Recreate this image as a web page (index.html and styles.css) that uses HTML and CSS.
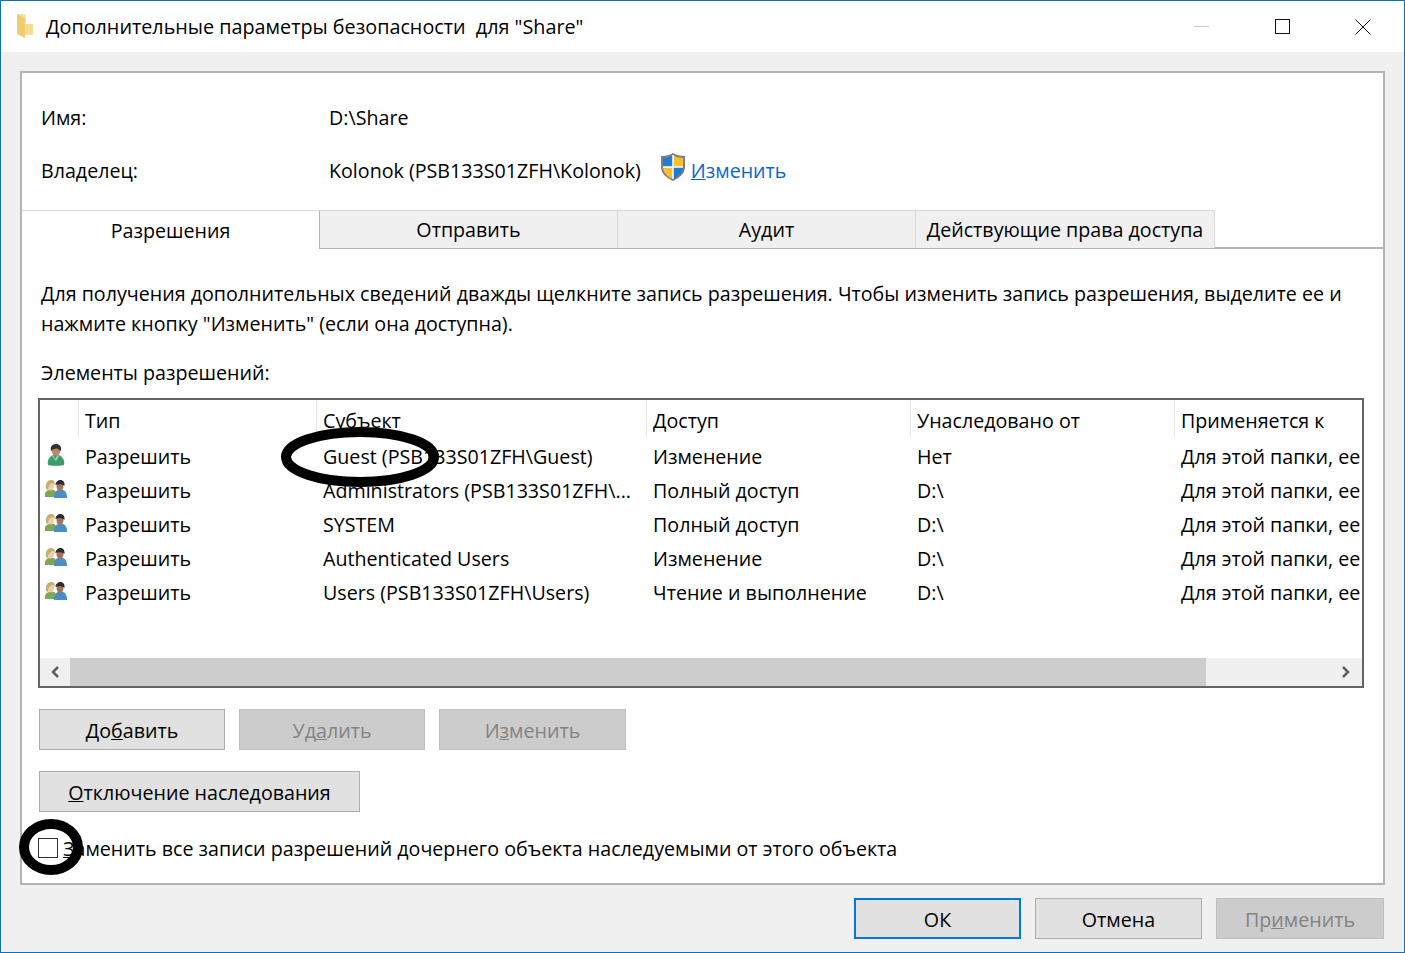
FILE: index.html
```html
<!DOCTYPE html>
<html lang="ru">
<head>
<meta charset="utf-8">
<title>Дополнительные параметры безопасности для "Share"</title>
<link rel="stylesheet" href="styles.css">
</head>
<body>
<svg class="defs" width="0" height="0" aria-hidden="true">
  <defs>
    <symbol id="user-one" viewBox="0 0 18 22">
      <path d="M1 21c-1-4 1-8 5-10h6c4 2 6 6 5 10-2 1-14 1-16 0z" fill="#3c9a6c"/>
      <path d="M6 11l2 4 3-4 1 1-3 5-4-5z" fill="#a8d6bb"/>
      <path d="M4.500 6c0-2 2-3 4.500-3s4.500 1 4.500 3c0 3-2 6-4.500 6s-4.500-3-4.500-6z" fill="#b98a68"/>
      <path d="M4 7C3 3 5 0 9 0c3 0 5 2 5 4 0 2 0 3-1 3-1-2-3-3-5-2-2 0-3 1-4 2z" fill="#33322e"/>
    </symbol>
    <symbol id="user-two" viewBox="0 0 22 18">
      <path d="M0 17c-1-4 1-6 4-7h5c2 1 3 3 3 7z" fill="#7fa653"/>
      <ellipse cx="5.500" cy="6" rx="3.500" ry="4.500" fill="#eccfa8"/>
      <path d="M1 9C0 3 3 0 6 0c3 0 4 2 4 5L8 3C6 3 3 5 3 10z" fill="#c4b06e"/>
      <path d="M9 18c0-4 1-7 4-8h5c3 1 4 4 4 8z" fill="#4b8ec6"/>
      <ellipse cx="15" cy="6" rx="3.500" ry="5" fill="#a5735a"/>
      <path d="M10.500 5C10.500 2 13 0 15.500 0S20 2 19.500 6C18 4 13 4 10.500 5z" fill="#2b2e31"/>
    </symbol>
  </defs>
</svg>
<div class="window">
  <header class="titlebar">
    <svg class="folder" width="17" height="24" viewBox="0 0 17 24" aria-hidden="true">
      <path d="M0 0h8l1 1v9h7v11H8z" fill="#f9e2a0"/>
      <path d="M8 10h8v10H8z" fill="#f7dc90"/>
      <path d="M0 0l8 4v20L0 20z" fill="#f2cd6f"/>
    </svg>
    <h1 class="title">Дополнительные параметры безопасности  для "Share"</h1>
    <div class="controls">
      <span class="control"><span class="min-glyph"></span></span>
      <span class="control"><span class="max-glyph"></span></span>
      <span class="control">
        <svg width="16" height="16" viewBox="0 0 16 16" aria-hidden="true"><path d="M.5.500l15 15M15.500.500l-15 15" stroke="#111" stroke-width="1" fill="none"/></svg>
      </span>
    </div>
  </header>
  <main class="body">
    <section class="panel">
      <div class="info">
        <div class="info-row info-name">
          <span class="info-label">Имя:</span>
          <span>D:\Share</span>
        </div>
        <div class="info-row info-owner">
          <span class="info-label">Владелец:</span>
          <span>Kolonok (PSB133S01ZFH\Kolonok)</span>
          <svg class="shield" width="26" height="28" viewBox="0 0 26 28" aria-hidden="true">
            <path d="M13 0c3 2 7 3 12 3v11c0 7-6 11-12 14C7 25 1 21 1 14V3c5 0 9-1 12-3z" fill="#7d7f80"/>
            <path d="M13 2v12H3V5c4 0 7-1 10-3z" fill="#1f7cd1"/>
            <path d="M13 2c3 2 6 3 10 3v9H13z" fill="#fbc02f"/>
            <path d="M3 14h10v12c-5-2-10-6-10-12z" fill="#fbc02f"/>
            <path d="M13 14h10c0 6-5 10-10 12z" fill="#1f7cd1"/>
            <path d="M13 2v24M3 14h20" stroke="#fff" stroke-width="1.500"/>
          </svg>
          <a class="link" href="#"><u>И</u>зменить</a>
        </div>
      </div>
      <nav class="tabs">
        <span class="tab tab-active">Разрешения</span>
        <span class="tab">Отправить</span>
        <span class="tab">Аудит</span>
        <span class="tab tab-last">Действующие права доступа</span>
      </nav>
      <div class="content">
        <p class="desc">Для получения дополнительных сведений дважды щелкните запись разрешения. Чтобы изменить запись разрешения, выделите ее и нажмите кнопку "Изменить" (если она доступна).</p>
        <p class="list-label">Элементы разрешений:</p>
        <div class="list">
          <div class="list-view">
            <div class="row head">
              <span class="cell-icon"></span>
              <span class="cell">Тип</span>
              <span class="cell">Субъект</span>
              <span class="cell">Доступ</span>
              <span class="cell">Унаследовано от</span>
              <span class="cell">Применяется к</span>
            </div>
            <div class="row">
              <span class="cell-icon"><svg class="ico-one" width="18" height="22"><use href="#user-one"/></svg></span>
              <span class="cell">Разрешить</span><span class="cell">Guest (PSB133S01ZFH\Guest)</span><span class="cell">Изменение</span><span class="cell">Нет</span><span class="cell">Для этой папки, ее</span>
            </div>
            <div class="row">
              <span class="cell-icon"><svg class="ico-two" width="22" height="18"><use href="#user-two"/></svg></span>
              <span class="cell">Разрешить</span><span class="cell">Administrators (PSB133S01ZFH\...</span><span class="cell">Полный доступ</span><span class="cell">D:\</span><span class="cell">Для этой папки, ее</span>
            </div>
            <div class="row">
              <span class="cell-icon"><svg class="ico-two" width="22" height="18"><use href="#user-two"/></svg></span>
              <span class="cell">Разрешить</span><span class="cell">SYSTEM</span><span class="cell">Полный доступ</span><span class="cell">D:\</span><span class="cell">Для этой папки, ее</span>
            </div>
            <div class="row">
              <span class="cell-icon"><svg class="ico-two" width="22" height="18"><use href="#user-two"/></svg></span>
              <span class="cell">Разрешить</span><span class="cell">Authenticated Users</span><span class="cell">Изменение</span><span class="cell">D:\</span><span class="cell">Для этой папки, ее</span>
            </div>
            <div class="row">
              <span class="cell-icon"><svg class="ico-two" width="22" height="18"><use href="#user-two"/></svg></span>
              <span class="cell">Разрешить</span><span class="cell">Users (PSB133S01ZFH\Users)</span><span class="cell">Чтение и выполнение</span><span class="cell">D:\</span><span class="cell">Для этой папки, ее</span>
            </div>
          </div>
          <div class="scrollbar">
            <span class="arrow">
              <svg width="10" height="12" viewBox="0 0 10 12" aria-hidden="true"><path d="M8 1L3 6l5 5" stroke="#606060" stroke-width="2.500" fill="none"/></svg>
            </span>
            <span class="thumb"></span>
            <span class="arrow arrow-right">
              <svg width="10" height="12" viewBox="0 0 10 12" aria-hidden="true"><path d="M2 1l5 5-5 5" stroke="#606060" stroke-width="2.500" fill="none"/></svg>
            </span>
          </div>
        </div>
        <div class="actions">
          <button class="btn btn-action" type="button">До<u>б</u>авить</button>
          <button class="btn btn-action btn-disabled" type="button">Уд<u>а</u>лить</button>
          <button class="btn btn-action btn-disabled" type="button">И<u>з</u>менить</button>
        </div>
        <button class="btn btn-inherit" type="button"><u>О</u>тключение наследования</button>
        <label class="check">
          <span class="box"></span>
          <span class="check-text"><u>З</u>аменить все записи разрешений дочернего объекта наследуемыми от этого объекта</span>
        </label>
      </div>
    </section>
    <footer class="footer">
      <button class="btn btn-foot btn-default" type="button">ОК</button>
      <button class="btn btn-foot" type="button">Отмена</button>
      <button class="btn btn-foot btn-disabled" type="button">Пр<u>и</u>менить</button>
    </footer>
  </main>
  <svg class="marks" width="1405" height="953" viewBox="0 0 1405 953" aria-hidden="true">
    <ellipse cx="360" cy="457" rx="74" ry="25" fill="none" stroke="#000" stroke-width="10"/>
    <ellipse cx="51" cy="847" rx="27" ry="23" fill="none" stroke="#000" stroke-width="10"/>
  </svg>
</div>
</body>
</html>
```
FILE: styles.css
```css
* { box-sizing: border-box; }
html, body { margin: 0; padding: 0; }
body {
  width: 1405px;
  height: 953px;
  overflow: hidden;
  background: #f0f0f0;
  color: #000;
  font-family: "Open Sans", "Noto Sans", sans-serif;
  font-size: 19.67px;
}
.defs { position: absolute; }
.window {
  position: relative;
  width: 1405px;
  height: 953px;
  border: 1px solid #0f6fbd;
  display: flex;
  flex-direction: column;
  background: #f0f0f0;
}
.titlebar {
  height: 51px;
  flex: none;
  background: #fff;
  display: flex;
  align-items: center;
  padding-left: 16px;
}
.folder { flex: none; margin-right: 12px; margin-bottom: 1px; }
.title {
  margin: 0;
  font-size: 19.78px;
  font-weight: 400;
  white-space: pre;
}
.controls { margin-left: auto; display: flex; margin-right: 1px; }
.control {
  width: 80px;
  height: 51px;
  display: flex;
  align-items: center;
  justify-content: center;
}
.min-glyph { width: 15px; height: 1px; background: #c8c8c8; margin-right: 3px; margin-bottom: 1px; }
.max-glyph { width: 15px; height: 15px; border: 1px solid #111; margin-right: 1px; }
.body {
  flex: 1;
  padding: 19px 19px 0;
  display: flex;
  flex-direction: column;
}
.panel {
  width: 1365px;
  height: 814px;
  flex: none;
  background: #fff;
  border: 2px solid #b4b4b4;
}
.info { height: 137px; padding: 24px 0 0 19px; }
.info-row { display: flex; align-items: center; height: 40px; }
.info-owner { margin-top: 13px; }
.info-label { width: 288px; flex: none; }
.shield { margin: 0 5px 0 19px; flex: none; position: relative; top: -3px; }
.link { color: #0a66d0; text-decoration: none; }
.tabs {
  height: 39px;
  display: flex;
  border-bottom: 2px solid #b4b4b4;
}
.tab {
  width: 298px;
  height: 38px;
  background: #f0f0f0;
  border-top: 1px solid #d9d9d9;
  border-right: 1px solid #d9d9d9;
  display: flex;
  align-items: center;
  justify-content: center;
}
.tab-last { width: 299px; }
.tab-active {
  background: #fff;
  height: 39px;
  margin-bottom: -2px;
  position: relative;
  border-right: 1px solid #b4b4b4;
}
.content { padding: 0 19px 0 17px; }
.desc {
  margin: 30px 0 0 2px;
  line-height: 30px;
  width: 1310px;
}
.list-label { margin: 19px 0 0 2px; line-height: 30px; height: 30px; }
.list {
  margin: 10px 0 0 -1px;
  height: 290px;
  width: 1326px;
  border: 2px solid #646464;
  display: flex;
  flex-direction: column;
  overflow: hidden;
}
.list-view { height: 258px; flex: none; overflow: hidden; }
.row {
  display: grid;
  grid-template-columns: 38px 238px 330px 264px 264px 188px;
  height: 34px;
  align-items: center;
  white-space: nowrap;
}
.head { height: 40px; align-items: start; }
.head .cell { height: 38px; line-height: 38px; padding-top: 2px; border-left: 1px solid #e5e5e5; padding-left: 6px; }
.cell { padding-left: 7px; line-height: 34px; }
.cell-icon { display: flex; align-items: center; padding-left: 5px; }
.ico-one, .ico-two { display: block; position: relative; }
.ico-one { top: -2px; left: 2px; }
.ico-two { top: -2px; }
.scrollbar {
  height: 28px;
  flex: none;
  display: flex;
  background: #f0f0f0;
}
.arrow {
  width: 30px;
  display: flex;
  align-items: center;
  justify-content: center;
  flex: none;
}
.arrow-right { flex: 1; justify-content: flex-end; padding-right: 11px; }
.thumb { width: 1136px; background: #cdcdcd; flex: none; }
.actions { display: flex; gap: 14px; margin-top: 21px; }
.btn {
  font-family: inherit;
  font-size: 19.67px;
  color: #000;
  background: #e1e1e1;
  border: 1px solid #adadad;
  height: 41px;
  padding: 2px 0 0;
  display: block;
}
.btn-action { width: 186px; }
.actions .btn-action:last-child { width: 187px; }
.btn-disabled { background: #cccccc; border-color: #bfbfbf; color: #838383; }
.btn-inherit { width: 321px; margin-top: 21px; }
.check {
  display: flex;
  align-items: center;
  margin-top: 16px;
  height: 40px;
}
.box {
  width: 20px;
  height: 20px;
  flex: none;
  border: 1px solid #333;
  background: #fff;
  margin-left: -1px;
}
.check-text { margin-left: 5px; white-space: nowrap; }
.footer {
  display: flex;
  gap: 14px;
  justify-content: flex-end;
  margin-top: 13px;
  width: 1364px;
}
.btn-foot { width: 167px; }
.btn-foot:last-child { width: 168px; }
.btn-default { border: 2px solid #0078d7; }
.marks { position: absolute; left: -1px; top: -1px; pointer-events: none; }
```
